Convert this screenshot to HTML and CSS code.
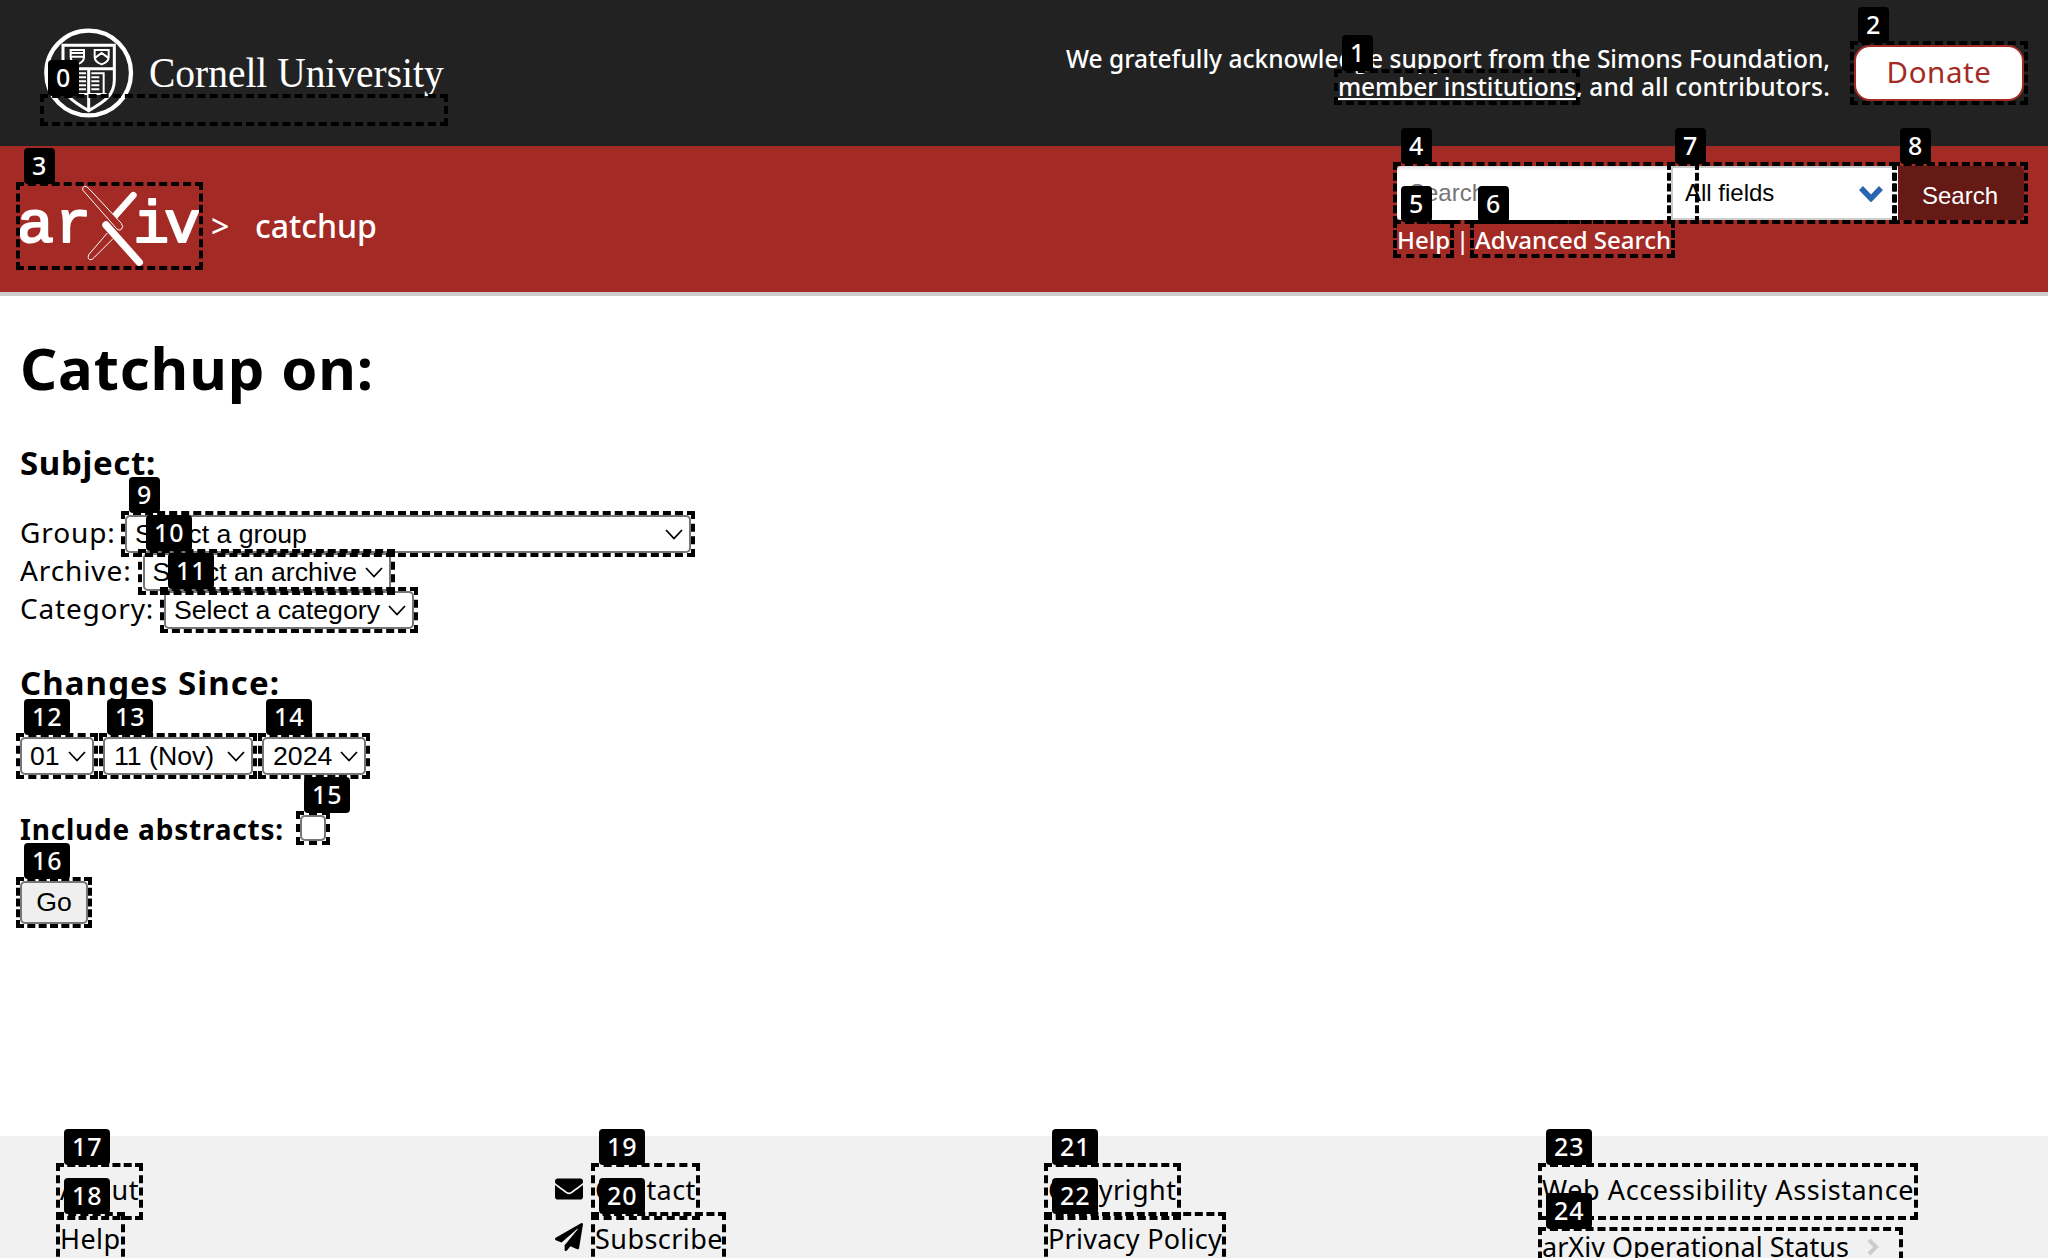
FILE: index.html
```html
<!DOCTYPE html>
<html lang="en">
<head>
<meta charset="utf-8">
<title>Catchup | arXiv</title>
<link rel="stylesheet" href="styles.css">
</head>
<body>
<header>
  <div class="cornell-bar">
    <a class="cornell">
      <svg width="400" height="110" viewBox="0 0 1200 330" fill="none" stroke="#fff">
        <circle cx="176" cy="159" r="127" stroke-width="13"/>
        <path d="M99 76H253V180C253 225 225 245 176 272C127 245 99 225 99 180Z" stroke-width="9"/>
        <path d="M99 146H253M176 146V272" stroke-width="9"/>
        <path d="M122 90H162V112Q162 126 142 133Q122 126 122 112ZM122 99H162M122 110H162M194 90H236V112Q236 126 215 133Q194 126 194 112ZM196 113L215 99L234 113" stroke-width="6"/>
        <path d="M184 160H221V222M184 172H208M184 184H208M184 196H208M184 208H208M168 160H131V222M168 172H144M168 184H144M168 196H144M168 208H144M122 222H230" stroke-width="6"/>
        <text x="357" y="201" textLength="884" lengthAdjust="spacingAndGlyphs" class="wordmark">Cornell University</text>
      </svg>
    </a>
    <p class="thanks">We gratefully acknowledge support from the Simons Foundation,<br><a class="under">member institutions</a><span class="rest">, and all contributors.</span></p>
    <a class="donate">Donate</a>
  </div>
  <div class="brand-bar">
    <a class="arxiv">
      <svg width="180" height="80" viewBox="30 33 540 240" fill="none" stroke="#fff">
        <g class="mono">
          <text x="20" y="200" textLength="112" lengthAdjust="spacingAndGlyphs">a</text><text x="136" y="200">r</text><text x="370" y="200">i</text><text x="463" y="200">v</text>
        </g>
        <path d="M370 61L314 124" stroke-width="20" stroke-linecap="round"/>
        <path d="M288 150L388 262" stroke-width="22" stroke-linecap="round"/>
        <path class="stick" d="M219 46Q214 37 223 34Q231 33 238 42L334 145Q342 155 334 163Q325 171 312 152Z" stroke-width="3"/>
        <path d="M292 174L237 238Q231 250 239 254Q247 256 254 246L309 191" stroke-width="3"/>
      </svg>
    </a>
    <div class="crumb"><span class="gt">&gt;</span><span>catchup</span></div>
    <form class="search">
      <div class="search-row">
        <div class="query">Search...</div>
        <div class="field">All fields<svg width="26" height="18" viewBox="0 0 26 18"><path d="M3 4L13 14.500L23 4" fill="none" stroke="#2a66ad" stroke-width="5.500"/></svg></div>
        <div class="search-btn">Search</div>
      </div>
      <div class="search-links"><a>Help</a><i>|</i><a>Advanced Search</a></div>
    </form>
  </div>
</header>
<main>
  <h1>Catchup on:</h1>
  <h2 class="subject">Subject:</h2>
  <div class="row"><label class="l-group">Group:</label><div class="select group">Select a group<svg class="chev" viewBox="0 0 18 11"><path d="M1 1L9 9.500L17 1"/></svg></div></div>
  <div class="row"><label class="l-archive">Archive:</label><div class="select archive">Select an archive<svg class="chev" viewBox="0 0 18 11"><path d="M1 1L9 9.500L17 1"/></svg></div></div>
  <div class="row"><label class="l-category">Category:</label><div class="select category">Select a category<svg class="chev" viewBox="0 0 18 11"><path d="M1 1L9 9.500L17 1"/></svg></div></div>
  <h2 class="since">Changes Since:</h2>
  <div class="row dates">
    <div class="select day">01<svg class="chev" viewBox="0 0 18 11"><path d="M1 1L9 9.500L17 1"/></svg></div>
    <div class="select month">11 (Nov)<svg class="chev" viewBox="0 0 18 11"><path d="M1 1L9 9.500L17 1"/></svg></div>
    <div class="select year">2024<svg class="chev" viewBox="0 0 18 11"><path d="M1 1L9 9.500L17 1"/></svg></div>
  </div>
  <div class="abstracts"><b>Include abstracts:</b><i class="check"></i></div>
  <div class="go">Go</div>
</main>
<footer>
  <div class="col c1"><a>About</a><a>Help</a></div>
  <div class="col icons">
    <svg width="28" height="28" viewBox="0 0 512 512"><path d="M502.300 190.800c3.900-3.100 9.700-.2 9.700 4.700V400c0 26.500-21.500 48-48 48H48c-26.500 0-48-21.500-48-48V195.600c0-5 5.700-7.800 9.700-4.700 22.400 17.400 52.100 39.500 154.100 113.600 21.100 15.400 56.700 47.800 92.200 47.600 35.700.3 72-32.800 92.300-47.600 102-74.100 131.600-96.300 154-113.700zM256 320c23.200.4 56.600-29.200 73.400-41.400 132.700-96.300 142.800-104.700 173.400-128.700 5.800-4.500 9.200-11.500 9.200-18.900v-19c0-26.500-21.500-48-48-48H48c-26.500 0-48 21.500-48 48v19c0 7.400 3.400 14.300 9.200 18.900 30.600 23.900 40.700 32.400 173.400 128.700 16.800 12.200 50.200 41.800 73.400 41.400z"/></svg>
    <svg width="28" height="28" viewBox="0 0 512 512"><path d="M476 3.200L12.500 270.600c-18.100 10.400-15.800 35.600 2.200 43.200L121 358.400l287.300-253.200c5.500-4.900 13.300 2.600 8.600 8.300L176 407v80.500c0 23.600 28.500 32.900 42.500 15.800L282 426l124.600 52.200c14.200 6 30.400-2.900 33-18.200l72-432C515 7.800 493.300-6.800 476 3.200z"/></svg>
  </div>
  <div class="col c2"><a>Contact</a><a>Subscribe</a></div>
  <div class="col c3"><a>Copyright</a><a class="tight">Privacy Policy</a></div>
  <div class="col c4"><a class="wide">Web Accessibility Assistance</a><a class="status">arXiv Operational Status<svg width="14" height="18" viewBox="0 0 14 18"><path d="M3 2L10 9L3 16" fill="none" stroke="#ccc" stroke-width="4"/></svg></a></div>
</footer>
<div class="marks">
  <div class="mark m0"><b>0</b></div><div class="mark m1"><b>1</b></div><div class="mark m2"><b>2</b></div><div class="mark m3"><b>3</b></div><div class="mark m4"><b>4</b></div>
  <div class="mark m5"><b>5</b></div><div class="mark m6"><b>6</b></div><div class="mark m7"><b>7</b></div><div class="mark m8"><b>8</b></div><div class="mark m9"><b>9</b></div>
  <div class="mark m10"><b>10</b></div><div class="mark m11"><b>11</b></div><div class="mark m12"><b>12</b></div><div class="mark m13"><b>13</b></div><div class="mark m14"><b>14</b></div>
  <div class="mark m15"><b>15</b></div><div class="mark m16"><b>16</b></div><div class="mark m17"><b>17</b></div><div class="mark m18"><b>18</b></div><div class="mark m19"><b>19</b></div>
  <div class="mark m20"><b>20</b></div><div class="mark m21"><b>21</b></div><div class="mark m22"><b>22</b></div><div class="mark m23"><b>23</b></div><div class="mark m24"><b>24</b></div>
</div>
</body>
</html>
```
FILE: styles.css
```css
* { box-sizing: border-box; }
html, body { margin: 0; height: 1258px; overflow: hidden; }
body { position: relative; display: flex; flex-direction: column; width: 2048px; background: #fff; color: #000; font-family: "Noto Sans", sans-serif; font-size: 28px; }
h1, h2, p { margin: 0; }
a, label, span, b { white-space: nowrap; }
svg { display: block; flex: none; }
i { font-style: normal; }
header, main { flex: none; }

.cornell-bar { display: flex; height: 146px; background: #222; color: #fff; }
.cornell { margin: 20px auto 0 30px; width: 416px; }
.cornell svg { overflow: visible; }
.wordmark { font: 124px "Liberation Serif", serif; fill: #fff; stroke: none; }
.thanks { padding-top: 45px; font-size: 24.5px; font-weight: 500; line-height: 28px; letter-spacing: 0.02px; text-align: right; }
.under { letter-spacing: -0.07px; text-decoration: underline; text-decoration-thickness: 2px; text-underline-offset: 2px; text-decoration-skip-ink: none; }
.rest { letter-spacing: 0.17px; }
.donate { display: flex; justify-content: center; width: 170px; height: 56px; margin: 45px 24px 0 24px; border: 2px solid #a42b25; border-radius: 16px; background: #fff; color: #a42b25; font-size: 29.5px; line-height: 49px; letter-spacing: 0.59px; }

.brand-bar { display: flex; height: 150px; background: #a42b25; border-bottom: 4px solid #ccc; color: #fff; }
.arxiv { margin: 40px 0 0 20px; }
.arxiv svg { overflow: visible; }
.mono { font: 180px "Liberation Mono", monospace; fill: #fff; stroke: #fff; stroke-width: 6px; stroke-linejoin: round; }
.stick { fill: #a42b25; }
.crumb { display: flex; gap: 24px; margin: 56px auto 0 11px; font-size: 32px; font-weight: 500; line-height: 48px; }
.gt { width: 20px; }
.search { width: 627px; margin-right: 24px; padding-top: 20px; font-family: "Liberation Sans", sans-serif; font-size: 24px; }
.search-row { display: flex; height: 54px; }
.query { width: 274px; padding-left: 12px; background: #fff; color: #757575; line-height: 54px; border-radius: 4px 0 0 4px; box-shadow: inset 0 3px 4px -2px #ccc; }
.field { display: flex; width: 227px; align-items: center; justify-content: space-between; padding: 0 14px 0 12px; border: 2px solid #ccc; border-right: 0; background: #fff; color: #000; }
.search-btn { flex: 1; padding-left: 24px; border-radius: 0 5px 5px 0; background: #651a16; line-height: 60px; }
.search-links { display: flex; gap: 6px; font: 500 24px/36px "Noto Sans", sans-serif; padding-top: 2px; }
.search-links i { width: 13px; text-align: center; }

main { display: flex; flex-direction: column; height: 840px; padding: 0 20px; }
h1 { margin-top: 33px; font-size: 58px; line-height: 78px; letter-spacing: 0.87px; }
h2 { margin-top: 32px; font-size: 33px; line-height: 46px; letter-spacing: 1.07px; }
.subject { margin-top: 33px; letter-spacing: 0.67px; }
.row { display: flex; height: 38px; line-height: 35px; }
.subject + .row { margin-top: 29px; }
.row label { flex: none; letter-spacing: 0.9px; }
.l-group { width: 105px; }
.l-archive { width: 122.5px; }
.row .l-category { width: 144px; letter-spacing: 0.8px; }
.select { display: flex; align-items: center; justify-content: space-between; height: 38px; padding: 0 6px 0 8px; border: 2px solid #767676; border-radius: 5px; background: #fff; font: 26.667px "Liberation Sans", sans-serif; }
.chev { width: 18px; height: 11px; fill: none; stroke: #000; stroke-width: 1.800; }
.group { width: 566px; }
.archive { width: 248px; }
.category { width: 250px; }
.since { margin-top: 31px; }
.dates { gap: 9px; margin-top: 31px; }
.day { width: 74px; }
.month { width: 150px; padding-left: 9px; }
.year { width: 104px; padding-left: 9px; }
.abstracts { display: flex; margin-top: 34px; line-height: 41px; height: 40px; letter-spacing: 0.79px; }
.check { width: 26px; height: 26px; margin: 6px 0 0 16px; border: 2px solid #767676; border-radius: 5px; }
.go { width: 68px; height: 43px; margin-top: 32px; border: 2px solid #767676; border-radius: 5px; background: #efefef; font: 26.667px/39px "Liberation Sans", sans-serif; text-align: center; }

footer { display: flex; flex: 1; min-height: 0; background: #f1f1f1; font-size: 27px; line-height: 49px; letter-spacing: 0.44px; padding: 29px 0 0 60px; }
.col { display: flex; flex-direction: column; align-items: flex-start; }
.c1 { width: 495px; }
.icons { width: 40px; gap: 20px; padding-top: 10px; }
.c2 { width: 453px; }
.c3 { width: 494px; }
.tight { letter-spacing: 0.26px; }
.wide { letter-spacing: 0.59px; }
.status { display: flex; align-items: center; gap: 17px; margin-top: 8px; letter-spacing: 0.02px; }

.marks { position: absolute; inset: 0; overflow: hidden; }
.mark { position: absolute; border: 4px dashed #000; }
.mark b { position: absolute; left: 4px; top: -38px; height: 36px; padding: 0 8px; border-radius: 4px; background: #000; color: #fff; font: 500 25px/35px "Noto Sans", sans-serif; letter-spacing: 0.9px; }
.m0 { left: 40px; top: 94px; width: 408px; height: 32px; }
.m1 { left: 1334px; top: 69px; width: 246px; height: 36px; }
.m2 { left: 1850px; top: 41px; width: 178px; height: 64px; }
.m3 { left: 16px; top: 182px; width: 187px; height: 88px; }
.m4 { left: 1393px; top: 162px; width: 306px; height: 62px; }
.m5 { left: 1393px; top: 220px; width: 61px; height: 38px; }
.m6 { left: 1470px; top: 220px; width: 205px; height: 38px; }
.m7 { left: 1667px; top: 162px; width: 230px; height: 62px; }
.m8 { left: 1892px; top: 162px; width: 136px; height: 62px; }
.m9 { left: 121px; top: 511px; width: 574px; height: 46px; }
.m10 { left: 138px; top: 549px; width: 257px; height: 46px; }
.m11 { left: 160px; top: 587px; width: 258px; height: 46px; }
.m12 { left: 16px; top: 733px; width: 82px; height: 46px; }
.m13 { left: 99px; top: 733px; width: 158px; height: 46px; }
.m14 { left: 258px; top: 733px; width: 112px; height: 46px; }
.m15 { left: 296px; top: 811px; width: 34px; height: 34px; }
.m16 { left: 16px; top: 877px; width: 76px; height: 51px; }
.m17 { left: 56px; top: 1163px; width: 87px; height: 57px; }
.m18 { left: 56px; top: 1212px; width: 69px; height: 57px; }
.m19 { left: 591px; top: 1163px; width: 109px; height: 57px; }
.m20 { left: 591px; top: 1212px; width: 135px; height: 57px; }
.m21 { left: 1044px; top: 1163px; width: 137px; height: 57px; }
.m22 { left: 1044px; top: 1212px; width: 182px; height: 57px; }
.m23 { left: 1538px; top: 1163px; width: 380px; height: 57px; }
.m24 { left: 1538px; top: 1227px; width: 365px; height: 57px; }
```
